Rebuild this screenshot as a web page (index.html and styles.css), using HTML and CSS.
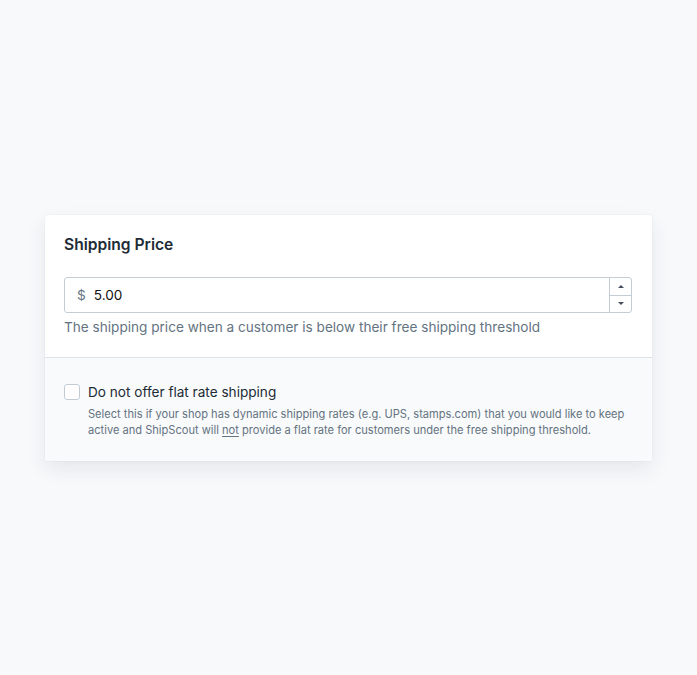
FILE: index.html
```html
<!doctype html>
<html lang="en">
  <head>
    <meta charset="UTF-8" />
    <meta name="viewport" content="width=device-width, initial-scale=1.0" />
    <title>Shipping Price</title>
    <link rel="stylesheet" href="styles.css">
  </head>
  <body>
    <main class="page">
      <section class="card">
        <div class="card-section">
          <h2 class="card-title">Shipping Price</h2>

          <div class="field">
            <div class="text-input">
              <span class="prefix">$</span>
              <input class="value" type="text" value="5.00" />
              <div class="spinner">
                <span class="spin spin-up"><i class="arrow arrow-up"></i></span>
                <span class="spin spin-down"><i class="arrow arrow-down"></i></span>
              </div>
            </div>
            <p class="help">The shipping price when a customer is below their free shipping threshold</p>
          </div>
        </div>

        <div class="card-section subdued">
          <label class="check">
            <input class="check-box" type="checkbox" />
            <span>Do not offer flat rate shipping</span>
          </label>
          <p class="check-help">
            Select this if your shop has dynamic shipping rates (e.g. UPS, stamps.com) that you would like to keep
            active and ShipScout will <span class="em">not</span> provide a flat rate for customers under the free shipping threshold.
          </p>
        </div>
      </section>
    </main>
  </body>
</html>
```

FILE: styles.css
```css
:root {
  font-family: Inter, "Noto Sans", sans-serif;
  color: #212b36;
}

body {
  margin: 0;
  background: #f8f9fb;
}

.page {
  padding: 215px 45px 0;
  min-height: 675px;
  box-sizing: border-box;
}

.card {
  background: white;
  border-radius: 3px;
  box-shadow: 0 0 0 1px rgba(63, 63, 68, 0.02), 0 8px 20px rgba(33, 43, 54, 0.09);
  overflow: hidden;
}

.card-section {
  padding: 18px 20px 20px 19px;
}

.card-title {
  margin: 0 0 20px;
  font-size: 15.6px;
  line-height: 24px;
  font-weight: 600;
}

.text-input {
  display: flex;
  align-items: stretch;
  height: 36px;
  box-sizing: border-box;
  border: 1px solid #c4cdd5;
  border-radius: 3px;
  background: white;
}

.prefix {
  display: flex;
  align-items: center;
  padding-left: 12px;
  color: #637381;
  font-size: 13.6px;
}

.value {
  flex: 1;
  border: 0;
  outline: none;
  padding: 0 0 0 8px;
  font: inherit;
  font-size: 13.6px;
  color: #111;
  background: transparent;
}

.spinner {
  display: flex;
  flex-direction: column;
  width: 21px;
  border-left: 1px solid #c4cdd5;
}

.spin {
  flex: 1;
  display: flex;
  align-items: center;
  justify-content: center;
}

.spin-up {
  border-bottom: 1px solid #c4cdd5;
}

.arrow {
  width: 0;
  height: 0;
  border-left: 3px solid transparent;
  border-right: 3px solid transparent;
}

.arrow-up {
  border-bottom: 3px solid #454f5b;
}

.arrow-down {
  border-top: 3px solid #454f5b;
}

.help {
  margin: 4px 0 0;
  font-size: 13.6px;
  line-height: 20px;
  color: #637381;
}

.subdued {
  background: #f9fafb;
  border-top: 1px solid #dfe3e8;
  padding-top: 24px;
  padding-bottom: 23px;
}

.check {
  display: flex;
  align-items: center;
  gap: 8px;
  font-size: 13.6px;
  line-height: 20px;
}

.check-box {
  appearance: none;
  margin: 0;
  width: 16px;
  height: 16px;
  border: 1px solid #c4cdd5;
  border-radius: 3px;
  background: white;
}

.check-help {
  margin: 4px 0 0 24px;
  font-size: 11.1px;
  line-height: 16px;
  color: #637381;
}

.em {
  text-decoration: underline;
  text-underline-offset: 2px;
}
```
